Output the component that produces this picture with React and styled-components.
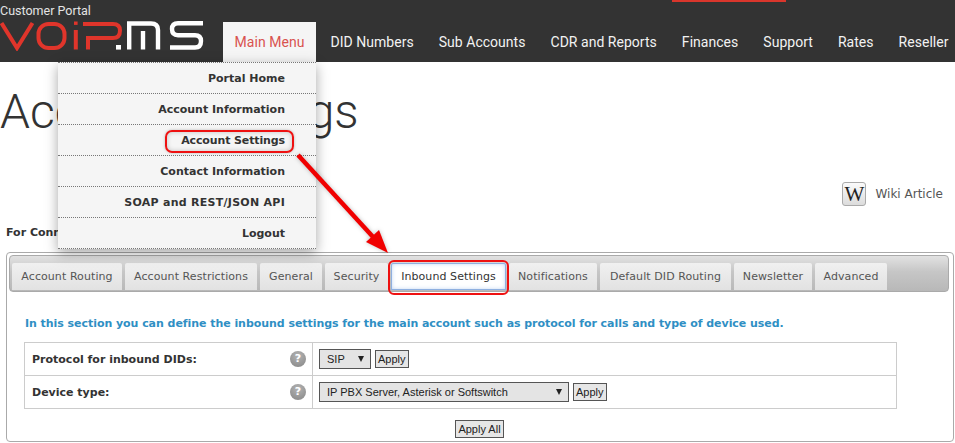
import React from 'react'
import styled, { createGlobalStyle } from 'styled-components'

const GlobalStyle = createGlobalStyle`
    html, body {
        margin: 0;
        padding: 0;
        background: #fff;
        font-family: "DejaVu Sans", Verdana, sans-serif;
        font-size: 11px;
        color: #333;
        overflow: hidden;
    }
`

const menuItems = ['DID Numbers', 'Sub Accounts', 'CDR and Reports', 'Finances', 'Support', 'Rates', 'Reseller']
const dropItems = [
    ['Portal Home', 0],
    ['Account Information', 0],
    ['Account Settings', -0.12],
    ['Contact Information', 0],
    ['SOAP and REST/JSON API', 0.27],
    ['Logout', 0],
]
const tabs = [
    ['Account Routing', 110],
    ['Account Restrictions', 132],
    ['General', 62],
    ['Security', 63],
    ['Inbound Settings', 115],
    ['Notifications', 88],
    ['Default DID Routing', 131],
    ['Newsletter', 78],
    ['Advanced', 72],
]

const Logo = () => (
    <LogoSvg viewBox="0 0 205 30" width="205" height="30">
        <g fill="none" stroke="#e0352b" strokeWidth="4">
            <path d="M1.5 2 L17 27 L32.5 2" />
            <rect x="38.5" y="3" width="26" height="24" rx="10" />
            <path d="M75.8 9 V28.5" />
            <path d="M83 3 H113 Q120 3 120 9.5 Q120 17 113 17 H88 V28.5" />
        </g>
        <rect x="74" y="0.5" width="3.6" height="3.4" fill="#e0352b" />
        <g fill="none" stroke="#fff" strokeWidth="4.4">
            <path d="M129.2 28.5 V2.5 H151 Q158 2.5 158 9 V28.5" />
            <path d="M143 10 V28.5" />
            <path d="M203 2.2 H178 Q172 2.2 172 8 Q172 14.2 178 14.2 H195 Q201 14.2 201 20 Q201 26.5 195 26.5 H170" />
        </g>
        <rect x="116" y="24" width="5" height="4.6" fill="#fff" />
    </LogoSvg>
)

const HelpIcon = () => (
    <Help>?</Help>
)

const Arrow = () => (
    <ArrowSvg viewBox="0 0 110 110" width="110" height="110">
        <path d="M3 3 L79 86" stroke="#f00000" strokeWidth="4.5" fill="none" />
        <polygon points="93,101 71,90 84,78" fill="#f00000" />
    </ArrowSvg>
)

const App = () => {
    return (
        <>
            <GlobalStyle />
            <Header>
                <TopMark />
                <Brand>
                    <Portal>Customer Portal</Portal>
                    <Logo />
                </Brand>
                <Nav>
                    <ActiveItem>
                        Main Menu
                        <Dropdown>
                            {dropItems.map(([item, spacing]) => (
                                <DropItem key={item}>
                                    <DropLabel $ring={item === 'Account Settings'} $spacing={spacing}>{item}</DropLabel>
                                </DropItem>
                            ))}
                        </Dropdown>
                    </ActiveItem>
                    {menuItems.map(item => <NavItem key={item}>{item}</NavItem>)}
                </Nav>
            </Header>
            <Main>
                <Title>Account Settings</Title>
                <WikiRow>
                    <WikiIcon>W</WikiIcon>
                    <WikiText>Wiki Article</WikiText>
                </WikiRow>
                <Intro>For Connection Settings</Intro>
                <Panel>
                    <TabBar>
                        {tabs.map(([name, width]) => (
                            <Tab key={name} $active={name === 'Inbound Settings'} $width={width}>{name}</Tab>
                        ))}
                    </TabBar>
                    <Description>
                        In this section you can define the inbound settings for the main account such as protocol for calls and type of device used.
                    </Description>
                    <Settings>
                        <tbody>
                            <tr>
                                <LabelCell>
                                    <LabelInner>Protocol for inbound DIDs:<HelpIcon /></LabelInner>
                                </LabelCell>
                                <ValueCell>
                                    <ValueRow>
                                        <FakeSelect $width={52}>SIP</FakeSelect>
                                        <Button>Apply</Button>
                                    </ValueRow>
                                </ValueCell>
                            </tr>
                            <tr>
                                <LabelCell>
                                    <LabelInner>Device type:<HelpIcon /></LabelInner>
                                </LabelCell>
                                <ValueCell>
                                    <ValueRow>
                                        <FakeSelect $width={250}>IP PBX Server, Asterisk or Softswitch</FakeSelect>
                                        <Button>Apply</Button>
                                    </ValueRow>
                                </ValueCell>
                            </tr>
                        </tbody>
                    </Settings>
                    <Footer>
                        <Button>Apply All</Button>
                    </Footer>
                </Panel>
            </Main>
            <Arrow />
        </>
    )
}

export default App

const Header = styled.header`
    position: relative;
    height: 62px;
    background: #333333;
    display: flex;
    align-items: flex-end;
    font-family: Roboto, sans-serif;
    font-size: 14px;
`

const TopMark = styled.div`
    position: absolute;
    top: 0;
    left: 672px;
    width: 114px;
    height: 2px;
    background: #d9362c;
`

const Brand = styled.div`
    width: 223px;
    height: 58px;
    flex: none;
    display: flex;
    flex-direction: column;
`

const Portal = styled.div`
    color: #e4e4e4;
    font-size: 12.5px;
    line-height: 14px;
`

const LogoSvg = styled.svg`
    display: block;
    margin-top: 3px;
`

const Nav = styled.nav`
    display: flex;
    align-items: flex-end;
    height: 40px;
    letter-spacing: 0.03px;
`

const NavItem = styled.div`
    height: 40px;
    line-height: 40px;
    padding: 0 12.5px;
    color: #f2f2f2;
    white-space: nowrap;
`

const ActiveItem = styled(NavItem)`
    position: relative;
    width: 93px;
    box-sizing: border-box;
    text-align: center;
    padding: 0;
    margin-right: 2px;
    background: #f5f5f5;
    color: #d9534f;
`

const Dropdown = styled.div`
    position: absolute;
    z-index: 5;
    top: 40px;
    right: 0;
    width: 258px;
    background: #f5f5f5;
    border-top: 1px dotted #777;
    box-shadow: 0 4px 12px rgba(0, 0, 0, 0.35);
    font-family: "DejaVu Sans", Verdana, sans-serif;
    font-size: 11px;
    font-weight: bold;
    letter-spacing: 0;
    color: #333;
    text-align: right;
`

const DropItem = styled.div`
    height: 30px;
    line-height: 32px;
    padding-right: 31px;
    border-bottom: 1px dotted #777;
`

const DropLabel = styled.span`
    position: relative;
    letter-spacing: ${props => props.$spacing}px;
    &::after {
        content: '';
        display: ${props => props.$ring ? 'block' : 'none'};
        position: absolute;
        left: -16px;
        right: -9px;
        top: -4px;
        bottom: -6px;
        border: 2px solid #ee1111;
        border-radius: 7px;
        box-shadow: inset 0 0 5px rgba(0, 0, 0, 0.2), 0 0 3px rgba(0, 0, 0, 0.25);
    }
`

const Main = styled.main`
    padding: 0 1px 0 6px;
`

const Title = styled.h1`
    margin: 22px 0 0 -6px;
    font-family: Roboto, sans-serif;
    font-weight: 300;
    font-size: 48px;
    line-height: 56px;
    color: #333;
    white-space: nowrap;
`

const WikiRow = styled.div`
    display: flex;
    justify-content: flex-end;
    align-items: center;
    gap: 9px;
    margin-top: 42px;
    padding-right: 11px;
`

const WikiIcon = styled.div`
    width: 22px;
    height: 22px;
    border: 1px solid #aaa;
    border-radius: 3px;
    background: linear-gradient(#fbfbfb, #dcdcdc);
    color: #222;
    font-family: "Liberation Serif", serif;
    font-size: 21px;
    line-height: 23px;
    text-align: center;
`

const WikiText = styled.div`
    font-size: 12px;
    color: #555;
    padding-bottom: 1px;
`

const Intro = styled.div`
    margin-top: 20px;
    font-weight: bold;
    line-height: 13px;
    color: #333;
    white-space: nowrap;
`

const Panel = styled.section`
    box-sizing: border-box;
    height: 190px;
    margin-top: 13px;
    padding: 2px;
    border: 1px solid #aaa;
    border-radius: 4px;
`

const TabBar = styled.div`
    box-sizing: border-box;
    height: 37px;
    margin-right: 2px;
    padding: 7px 2px 0;
    display: flex;
    gap: 3px;
    border: 1px solid #aaa;
    border-radius: 4px;
    background: linear-gradient(#e2e2e2, #c6c6c6 45%, #b8b8b8);
`

const Tab = styled.div`
    box-sizing: border-box;
    flex: none;
    width: ${props => props.$width}px;
    height: 27px;
    line-height: 28px;
    letter-spacing: 0.08px;
    text-align: center;
    border-radius: 2px 2px 0 0;
    white-space: nowrap;
    color: ${props => props.$active ? '#333' : '#555'};
    background: ${props => props.$active ? '#fff' : 'linear-gradient(#f0f0f0, #e2e2e2)'};
    position: relative;
    ${props => props.$active && `
        box-shadow: inset 0 0 0 1px #8fb0e0, inset 0 0 5px #a8c4ee;
        &::after {
            content: '';
            position: absolute;
            left: -3px;
            right: -3px;
            top: -3px;
            bottom: -5px;
            border: 2px solid #ee1111;
            border-radius: 6px;
        }
    `}
`

const Description = styled.p`
    margin: 25px 0 0 16px;
    line-height: 13px;
    font-weight: bold;
    letter-spacing: -0.05px;
    color: #2f8fc4;
    white-space: nowrap;
`

const Settings = styled.table`
    width: 873px;
    margin: 12px 0 0 15px;
    border-collapse: collapse;
`

const LabelCell = styled.td`
    box-sizing: border-box;
    width: 288px;
    height: 33px;
    padding: 0 6px 0 7px;
    border: 1px solid #ccc;
    font-weight: bold;
    color: #333;
`

const LabelInner = styled.div`
    display: flex;
    justify-content: space-between;
    align-items: center;
`

const ValueCell = styled.td`
    box-sizing: border-box;
    height: 33px;
    padding: 0 0 0 6px;
    border: 1px solid #ccc;
    font-family: "Liberation Sans", Arial, sans-serif;
    font-size: 11px;
`

const ValueRow = styled.div`
    display: flex;
    align-items: center;
    gap: 4px;
`

const Help = styled.span`
    width: 16px;
    height: 16px;
    border-radius: 50%;
    background: radial-gradient(circle at 50% 30%, #b4b4b4, #858585);
    color: #fff;
    font-family: "DejaVu Sans", sans-serif;
    font-size: 11px;
    font-weight: bold;
    line-height: 16px;
    text-align: center;
`

const FakeSelect = styled.span`
    box-sizing: border-box;
    display: block;
    position: relative;
    width: ${props => props.$width}px;
    height: 20px;
    line-height: 18px;
    padding-left: 7px;
    background: #e4e4e4;
    border: 1px solid #555;
    color: #222;
    white-space: nowrap;
    &::after {
        content: '';
        position: absolute;
        right: 6px;
        top: 6px;
        border-left: 3.5px solid transparent;
        border-right: 3.5px solid transparent;
        border-top: 6px solid #222;
    }
`

const Button = styled.button`
    box-sizing: border-box;
    display: inline-block;
    height: 18px;
    padding: 0 2px;
    border: 1px solid #555;
    border-radius: 0;
    background: #e6e6e6;
    font-family: "Liberation Sans", Arial, sans-serif;
    font-size: 11px;
    line-height: 15px;
    color: #222;
`

const Footer = styled.div`
    margin-top: 11px;
    padding-right: 1px;
    text-align: center;
`

const ArrowSvg = styled.svg`
    position: absolute;
    z-index: 6;
    left: 295px;
    top: 152px;
    filter: drop-shadow(0 0 2px rgba(0, 0, 0, 0.25));
`
